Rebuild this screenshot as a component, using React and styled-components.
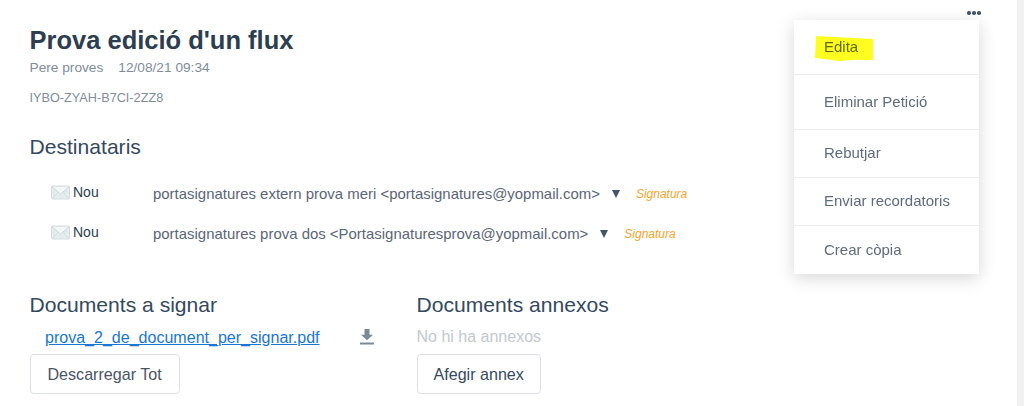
import React from 'react';
import styled, { createGlobalStyle } from 'styled-components';

const Global = createGlobalStyle`
  html, body { margin: 0; padding: 0; background: #fff; }
  body { font-family: "Liberation Sans", Arial, sans-serif; color: #2c3e50; overflow: hidden; }
`;
const Page = styled.div`
  width: 1024px; height: 406px; display: flex; overflow: hidden; position: relative;
`;
const Main = styled.main`
  width: 1017px; height: 406px; background: #fff; padding: 26px 0 0 29.5px; box-sizing: border-box; position: relative;
`;
const Strip = styled.div`
  width: 7px; background: #f1f1f1;
`;
const Title = styled.h1`
  margin: 0; font-size: 25.5px; line-height: 28px; font-weight: 700; color: #2c3e50;
`;
const Meta = styled.div`
  margin-top: 5px; font-size: 13.7px; line-height: 18px; color: #7f8c9a; display: flex; gap: 15px;
`;
const Code = styled.div`
  margin-top: 14px; font-size: 12.7px; line-height: 14px; color: #7f8c9a;
`;
const Heading = styled.h2`
  margin: 0; font-size: 21.1px; line-height: 24px; font-weight: 400; color: #34495e;
`;
const Recipients = styled.section`
  margin-top: 30px;
`;
const List = styled.div`
  margin-top: 25px; display: flex; flex-direction: column; gap: 21px; padding-left: 21.5px;
`;
const Row = styled.div`
  display: flex; align-items: center; height: 19px;
`;
const Status = styled.div`
  width: 102px; display: flex; align-items: center; gap: 3px; font-size: 14px; color: #2c3e50; margin-top: -3px;
`;
const Person = styled.span`
  font-size: 14.95px; color: #5a6675;
`;
const Caret = styled.span`
  width: 0; height: 0; margin-left: 12px; border-left: 4.5px solid transparent; border-right: 4.5px solid transparent; border-top: 8px solid #465566;
`;
const Role = styled.em`
  margin-left: 16px; font-size: 12px; color: #f5a32a;
`;
const Columns = styled.div`
  margin-top: 50px; display: flex;
`;
const Column = styled.section`
  width: 387px;
`;
const FileRow = styled.div`
  display: flex; align-items: center; margin-top: 9px; height: 22px; padding-left: 15.5px; width: 345px; box-sizing: border-box;
`;
const FileLink = styled.a`
  font-size: 16.05px; color: #1976d2; text-decoration: underline; flex: 1;
`;
const Empty = styled.div`
  margin-top: 9px; height: 22px; line-height: 22px; font-size: 16px; color: #c3c8ce;
`;
const Button = styled.button`
  display: block; height: 40px; margin-top: 6px; padding: 0 ${p => p.$dark ? 16 : 17}px; box-sizing: border-box; background: #fff;
  border: 1px solid #dcdfe3; border-radius: 4px; font: 16.1px "Liberation Sans", Arial, sans-serif; color: ${p => p.$dark ? '#34495e' : '#4a5563'};
`;
const Dots = styled.div`
  position: absolute; left: 967px; top: 11px; display: flex; gap: 1.5px;
  & > i { width: 3.5px; height: 3.5px; border-radius: 50%; background: #465566; display: block; }
`;
const Menu = styled.nav`
  position: absolute; left: 794px; top: 20px; width: 185px; height: 254px; background: #fff;
  box-shadow: 0 4px 16px rgba(0,0,0,.16); display: flex; flex-direction: column; z-index: 2;
`;
const MenuItem = styled.div`
  height: ${p => p.$h}px; box-sizing: border-box; padding: 0 0 2px 30px; display: flex; align-items: center;
  font-size: 15px; color: #5f6b7a; border-bottom: ${p => p.$last ? '0' : '1px solid #ececec'};
`;
const Marker = styled.svg`
  position: absolute; left: 19px; top: 14px; mix-blend-mode: multiply;
`;

const Mail = () => (
  <svg width="19" height="15" viewBox="0 0 19 15">
    <rect x="0.5" y="1" width="18" height="13" rx="1" fill="#e4ecee" stroke="#d6dcde"/>
    <path d="M1 2l8.5 7L18 2" fill="#f4f7f7" stroke="#cdd5d8"/>
    <path d="M1 13.5l6-6M18 13.5l-6-6" stroke="#d6dcde" fill="none"/>
  </svg>
);
const Download = () => (
  <svg width="16" height="16" viewBox="0 0 16 16">
    <path d="M5.5 1h5v6H14l-6 6-6-6h3.5z" fill="#7b8a99" transform="translate(0 -1) scale(1 .95)"/>
    <rect x="1" y="13.5" width="14" height="2" fill="#7b8a99"/>
  </svg>
);

export default function App() {
  return (
    <Page>
      <Global />
      <Main>
        <Title>Prova edició d'un flux</Title>
        <Meta><span>Pere proves</span><span>12/08/21 09:34</span></Meta>
        <Code>IYBO-ZYAH-B7CI-2ZZ8</Code>
        <Recipients>
          <Heading>Destinataris</Heading>
          <List>
            <Row>
              <Status><Mail />Nou</Status>
              <Person>portasignatures extern prova meri &lt;portasignatures@yopmail.com&gt;</Person>
              <Caret /><Role>Signatura</Role>
            </Row>
            <Row>
              <Status><Mail />Nou</Status>
              <Person>portasignatures prova dos &lt;Portasignaturesprova@yopmail.com&gt;</Person>
              <Caret /><Role>Signatura</Role>
            </Row>
          </List>
        </Recipients>
        <Columns>
          <Column>
            <Heading>Documents a signar</Heading>
            <FileRow>
              <FileLink href="#">prova_2_de_document_per_signar.pdf</FileLink>
              <Download />
            </FileRow>
            <Button>Descarregar Tot</Button>
          </Column>
          <Column>
            <Heading>Documents annexos</Heading>
            <Empty>No hi ha annexos</Empty>
            <Button $dark>Afegir annex</Button>
          </Column>
        </Columns>
        <Dots><i /><i /><i /></Dots>
        <Menu>
          <MenuItem $h={55}>Edita</MenuItem>
          <MenuItem $h={55}>Eliminar Petició</MenuItem>
          <MenuItem $h={48}>Rebutjar</MenuItem>
          <MenuItem $h={48}>Enviar recordatoris</MenuItem>
          <MenuItem $h={48} $last>Crear còpia</MenuItem>
          <Marker width="62" height="28" viewBox="0 0 62 28">
            <path d="M3 2l19 1 38 2 0 21-20 0-14 1-15-2-9-1z" fill="#fdfd20"/>
          </Marker>
        </Menu>
      </Main>
      <Strip />
    </Page>
  );
}
